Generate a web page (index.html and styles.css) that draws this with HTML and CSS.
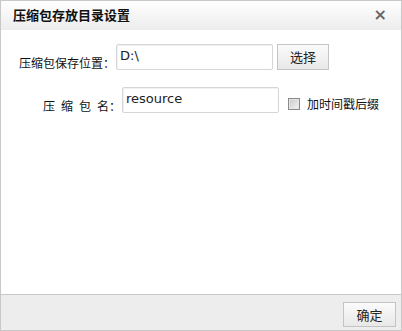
FILE: index.html
```html
<!DOCTYPE html>
<html>
<head>
<meta charset="utf-8">
<link rel="stylesheet" href="styles.css">
</head>
<body>
<div class="dialog">
  <div class="titlebar">
    <span class="title">压缩包存放目录设置</span>
    <span class="close">×</span>
  </div>
  <div class="content">
    <div class="row row1">
      <span class="label">压缩包保存位置：</span>
      <div class="input input1">D:\</div>
      <button class="btn btn-choose">选择</button>
    </div>
    <div class="row row2">
      <span class="label">压&ensp;缩&ensp;包&ensp;名：</span>
      <div class="input input2">resource</div>
      <span class="check"></span>
      <span class="check-label">加时间戳后缀</span>
    </div>
  </div>
  <div class="footer">
    <button class="btn btn-ok">确定</button>
  </div>
</div>
</body>
</html>
```
FILE: styles.css
```css
html, body {
  margin: 0;
  padding: 0;
  background: #fff;
}
.dialog {
  width: 400px;
  height: 329px;
  border: 1px solid #c8c8c8;
  display: flex;
  flex-direction: column;
  font-family: "Noto Sans CJK SC", "DejaVu Sans", sans-serif;
  color: #222;
}
.titlebar {
  height: 29px;
  display: flex;
  align-items: center;
  justify-content: space-between;
  padding: 0 14px 0 12px;
  background: linear-gradient(#ffffff, #ececec);
}
.title {
  font-size: 13px;
  font-weight: bold;
  color: #111;
  line-height: 16px;
  margin-top: -1px;
}
.close {
  font-family: "DejaVu Sans", sans-serif;
  font-size: 16px;
  font-weight: bold;
  color: #666;
  line-height: 16px;
  margin-top: -1px;
}
.content {
  flex: 1;
  background: #fff;
  padding-top: 14px;
}
.row {
  display: flex;
  align-items: flex-end;
}
.row1 {
  padding-left: 18px;
}
.row2 {
  padding-left: 42px;
  margin-top: 17px;
}
.label {
  font-size: 12px;
  line-height: 14px;
  margin-bottom: 0;
  white-space: pre;
  color: #111;
}
.input {
  box-sizing: border-box;
  width: 157px;
  height: 26px;
  border: 1px solid #d6d6d6;
  border-radius: 2px;
  font-family: "DejaVu Sans", sans-serif;
  font-size: 13px;
  line-height: 15px;
  padding: 3px 0 0 3px;
  color: #222;
  box-shadow: inset 1px 1px 1px #f0f0f0;
}
.input1 {
  margin-left: 1px;
}
.input2 {
  margin-left: 1px;
}
.btn {
  box-sizing: border-box;
  font-family: "Noto Sans CJK SC", sans-serif;
  font-size: 13px;
  color: #222;
  border: 1px solid #c4c4c4;
  background: linear-gradient(#fbfbfb, #e8e8e8);
  padding: 0;
  line-height: 20px;
}
.btn-choose {
  width: 52px;
  height: 26px;
  margin-left: 4px;
}
.check {
  box-sizing: border-box;
  width: 12px;
  height: 12px;
  border: 1px solid #8a8a8a;
  background: linear-gradient(135deg, #c8c8c8, #f4f4f4);
  box-shadow: inset 0 0 0 1px #e6e6e6;
  margin-left: 9px;
  margin-bottom: 3px;
}
.check-label {
  font-size: 12px;
  line-height: 14px;
  margin-left: 7px;
  margin-bottom: 2px;
  color: #111;
}
.footer {
  border-top: 1px solid #c8c8c8;
  background: #ededed;
  display: flex;
  justify-content: flex-end;
  align-items: flex-start;
  padding-top: 7px;
  padding-right: 5px;
  box-sizing: border-box;
  height: 36px;
}
.btn-ok {
  width: 53px;
  height: 25px;
}
```
